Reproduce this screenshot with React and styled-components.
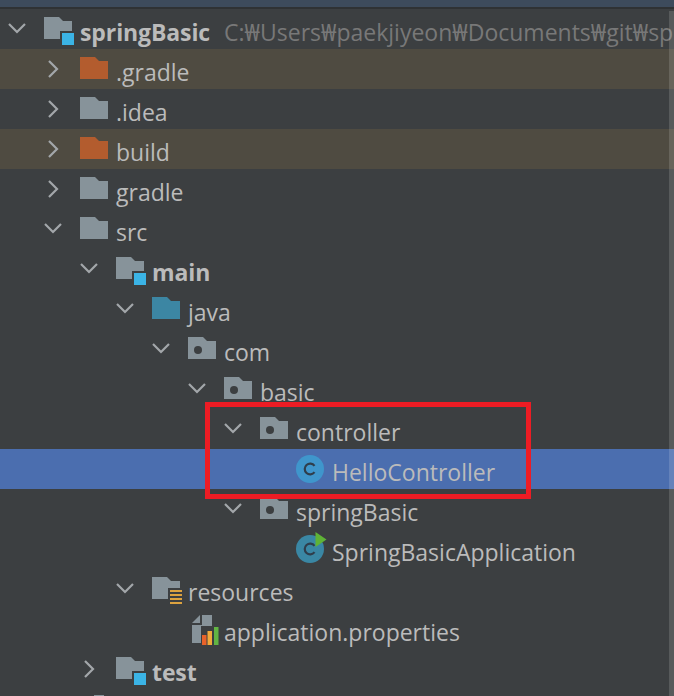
import React from 'react'
import styled, { createGlobalStyle } from 'styled-components'

const GlobalStyle = createGlobalStyle`
html, body {
  margin: 0;
  padding: 0;
  background: #3c3f41;
}
`

const Window = styled.div`
  position: relative;
  width: 674px;
  height: 696px;
  overflow: hidden;
  background: #3c3f41;
  font-family: "Open Sans", "Noto Sans", sans-serif;
  font-size: 23px;
  color: #bbbbbb;
`
const TitleBar = styled.div`
  height: 7px;
  background: #3d4b5c;
  border-bottom: 2px solid #2f3234;
`
const Row = styled.div`
  display: flex;
  align-items: center;
  height: 40px;
  padding-left: ${p => 8 + p.$depth * 36}px;
  background: ${p => (p.$selected ? '#4b6eaf' : p.$ignored ? '#4f4b41' : 'transparent')};
  white-space: nowrap;
`
const ChevronSlot = styled.span`
  display: flex;
  flex: none;
  width: 36px;
`
const IconSlot = styled.span`
  display: flex;
  flex: none;
  width: 36px;
  margin-bottom: 2px;
`
const Label = styled.span`
  font-weight: ${p => (p.$bold ? 700 : 400)};
  letter-spacing: ${p => (p.$bold ? '-0.1px' : '0')};
  line-height: 40px;
  margin-top: 6px;
`
const Path = styled.span`
  margin-left: 14px;
  margin-top: 6px;
  line-height: 40px;
  color: #787878;
`
const Scrollbar = styled.div`
  position: absolute;
  top: 11px;
  right: 0;
  bottom: 0;
  width: 5px;
  background: rgba(255, 255, 255, 0.14);
`
const Highlight = styled.div`
  position: absolute;
  left: 205px;
  top: 402px;
  width: 326px;
  height: 97px;
  box-sizing: border-box;
  border: 5px solid #ed1c24;
`

const Chevron = ({ open }) => (
  <svg width="18" height="18" viewBox="0 0 18 18" fill="none" stroke="#a3a7aa" strokeWidth="2.2">
    {open ? <path d="M1 4L9 12L17 4" /> : <path d="M5 1L13 9L5 17" />}
  </svg>
)

const FOLDER = 'M0 0H15L19 4H28V22H0Z'

const Folder = ({ color = '#87939a', dot, badge, stripes }) => (
  <svg width="30" height="28" viewBox="0 0 30 28" style={{ overflow: 'visible', marginBottom: -6 }}>
    <path d={FOLDER} fill={color} />
    {dot && <circle cx="10" cy="13" r="4" fill="#3c3f41" />}
    {badge && (
      <>
        <rect x="16" y="14" width="16" height="16" fill="#3c3f41" />
        <rect x="18" y="16" width="12" height="12" fill="#3bb4e6" />
      </>
    )}
    {stripes && (
      <>
        <rect x="16" y="11" width="16" height="19" fill="#3c3f41" />
        <g fill="#dca23f">
          <rect x="18" y="13" width="12" height="2" />
          <rect x="18" y="17" width="12" height="2" />
          <rect x="18" y="21" width="12" height="2" />
          <rect x="18" y="25" width="12" height="2" />
        </g>
      </>
    )}
  </svg>
)

const ClassIcon = ({ color = '#3f96cc', run }) => (
  <svg width="28" height="28" viewBox="0 0 28 28" style={{ overflow: 'visible', marginBottom: -2 }}>
    <circle cx="14" cy="14" r="14" fill={color} />
    <path d="M18.5 10.8A5.4 5.4 0 1 0 18.5 17.2" fill="none" stroke="#2f3e4c" strokeWidth="2.2" />
    {run && <path d="M19.5 -3L30.5 4.5L19.5 12Z" fill="#5fb336" />}
  </svg>
)

const PropertiesIcon = () => (
  <svg width="26" height="30" viewBox="0 0 26 30" style={{ marginLeft: 4, marginBottom: -4, overflow: 'visible' }}>
    <path d="M0 8L8 0V8Z" fill="#87939a" />
    <path d="M10 0H20V12H13V28H0V10H10Z" fill="#87939a" />
    <rect x="9" y="11" width="18" height="20" fill="#3c3f41" />
    <rect x="20" y="0" width="7" height="11" fill="#3c3f41" />
    <rect x="10" y="20" width="4.5" height="10" fill="#e8622a" />
    <rect x="15.5" y="16" width="4.5" height="14" fill="#f2a93b" />
    <rect x="22" y="12" width="4.5" height="18" fill="#62b543" />
  </svg>
)

// only the top edge of this one shows at the bottom of the window
const FileStub = () => (
  <svg width="28" height="28" viewBox="0 0 28 28" style={{ marginBottom: -2 }}>
    <path d="M14 0H24V28H0V10H14Z" fill="#87939a" />
  </svg>
)

const TreeRow = ({ depth, open, icon, bold, children, path, ignored, selected, leaf }) => (
  <Row $depth={depth} $ignored={ignored} $selected={selected}>
    <ChevronSlot>{!leaf && <Chevron open={open} />}</ChevronSlot>
    <IconSlot>{icon}</IconSlot>
    {children && <Label $bold={bold}>{children}</Label>}
    {path && <Path>{path}</Path>}
  </Row>
)

export default function App() {
  return (
    <Window>
      <GlobalStyle />
      <TitleBar />
      <TreeRow depth={0} open bold icon={<Folder badge />} path="C:₩Users₩paekjiyeon₩Documents₩git₩sp">
        springBasic
      </TreeRow>
      <TreeRow depth={1} ignored icon={<Folder color="#b35c2e" />}>.gradle</TreeRow>
      <TreeRow depth={1} icon={<Folder />}>.idea</TreeRow>
      <TreeRow depth={1} ignored icon={<Folder color="#b35c2e" />}>build</TreeRow>
      <TreeRow depth={1} icon={<Folder />}>gradle</TreeRow>
      <TreeRow depth={1} open icon={<Folder />}>src</TreeRow>
      <TreeRow depth={2} open bold icon={<Folder badge />}>main</TreeRow>
      <TreeRow depth={3} open icon={<Folder color="#3c86a3" />}>java</TreeRow>
      <TreeRow depth={4} open icon={<Folder dot />}>com</TreeRow>
      <TreeRow depth={5} open icon={<Folder dot />}>basic</TreeRow>
      <TreeRow depth={6} open icon={<Folder dot />}>controller</TreeRow>
      <TreeRow depth={7} leaf selected icon={<ClassIcon />}>HelloController</TreeRow>
      <TreeRow depth={6} open icon={<Folder dot />}>springBasic</TreeRow>
      <TreeRow depth={7} leaf icon={<ClassIcon color="#3a87a4" run />}>SpringBasicApplication</TreeRow>
      <TreeRow depth={3} open icon={<Folder stripes />}>resources</TreeRow>
      <TreeRow depth={4} leaf icon={<PropertiesIcon />}>application.properties</TreeRow>
      <TreeRow depth={2} bold icon={<Folder badge />}>test</TreeRow>
      <TreeRow depth={1} leaf icon={<FileStub />} />
      <Highlight />
      <Scrollbar />
    </Window>
  )
}
